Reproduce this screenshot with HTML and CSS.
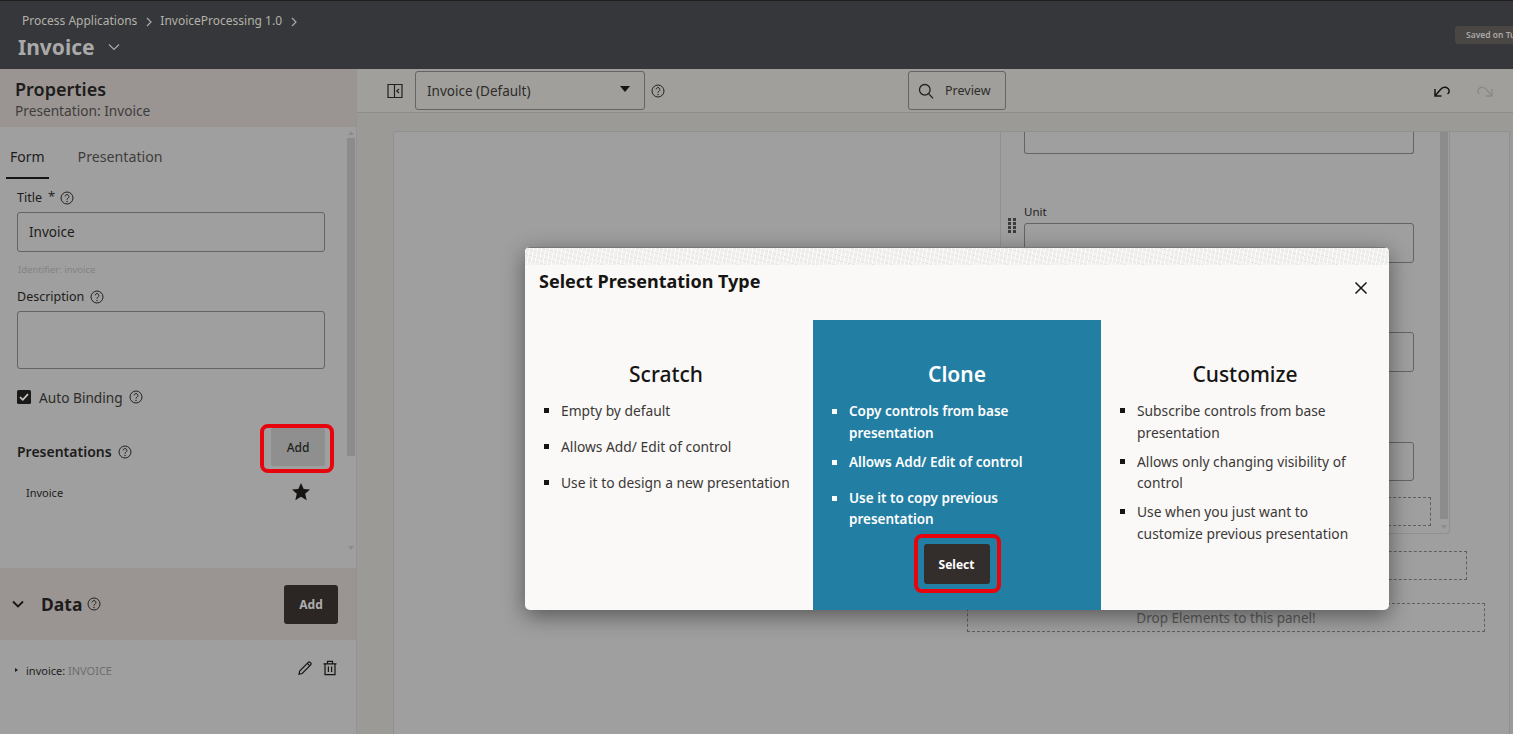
FILE: index.html
```html
<html lang="en">
  <head>
    <title>Invoice</title>
    <meta charset="utf-8">
    <link rel="stylesheet" href="styles.css">
  </head>
  <body>
    <header class="topbar">
      <div class="topbar-left">
        <div class="crumbs">
          <span>Process Applications</span>
          <svg class="crumb-sep" viewBox="0 0 8 10"><path d="M2 1l4 4-4 4"/></svg>
          <span>InvoiceProcessing 1.0</span>
          <svg class="crumb-sep" viewBox="0 0 8 10"><path d="M2 1l4 4-4 4"/></svg>
        </div>
        <div class="page-title">
          <span>Invoice</span>
          <svg class="title-chev" viewBox="0 0 12 8"><path d="M1 1.5l5 5 5-5"/></svg>
        </div>
      </div>
      <div class="saved">Saved on Tue</div>
    </header>

    <div class="main">
      <aside class="side">
        <div class="side-head">
          <h1>Properties</h1>
          <p>Presentation: Invoice</p>
        </div>
        <div class="side-scroll">
          <div class="side-form">
            <div class="tabs">
              <span class="tab tab-on">Form</span>
              <span class="tab">Presentation</span>
            </div>
            <div class="label l-title">Title <sup>*</sup> <svg class="help" viewBox="0 0 14 14"><use href="#q"/></svg></div>
            <div class="input">Invoice</div>
            <div class="ident">Identifier: invoice</div>
            <div class="label l-desc">Description <svg class="help" viewBox="0 0 14 14"><use href="#q"/></svg></div>
            <div class="input area"></div>
            <div class="check-row">
              <svg class="check" viewBox="0 0 14 14"><rect width="14" height="14" rx="1.5"/><path d="M3 7.2l2.8 2.6L11 4.2"/></svg>
              <span>Auto Binding</span>
              <svg class="help" viewBox="0 0 14 14"><use href="#q"/></svg>
            </div>
            <div class="pres-row">
              <span class="pres-title">Presentations</span>
              <svg class="help" viewBox="0 0 14 14"><use href="#q"/></svg>
              <span class="marked marked-add"><button class="btn-grey">Add</button></span>
            </div>
            <div class="pres-item">
              <span>Invoice</span>
              <svg class="star" viewBox="0 0 20 20"><path d="M10 1l2.7 6 6.3.6-4.8 4.2 1.5 6.4L10 14.8l-5.7 3.4 1.5-6.4L1 7.6 7.3 7z"/></svg>
            </div>
          </div>
          <div class="scrollbar">
            <i class="arrow-up"></i>
            <b class="thumb"></b>
            <i class="arrow-down"></i>
          </div>
        </div>
        <div class="data-head">
          <svg class="data-chev" viewBox="0 0 12 8"><path d="M1 1.5l5 5 5-5"/></svg>
          <span class="data-title">Data</span>
          <svg class="help" viewBox="0 0 14 14"><use href="#q"/></svg>
          <button class="btn-dark">Add</button>
        </div>
        <div class="data-row">
          <i class="tree-arrow"></i>
          <span>invoice: <em>INVOICE</em></span>
          <svg class="row-icon pencil" viewBox="0 0 16 16"><path d="M2 14.3l.7-3.3L11.5 2.2a1 1 0 0 1 1.4 0l1 1a1 1 0 0 1 0 1.4L5.2 13.5zM10.4 3.4l2.4 2.4"/></svg>
          <svg class="row-icon" viewBox="0 0 16 16"><path d="M1.5 3.8h13M5.5 3.8V1.3h5v2.5M3 3.8v10.9h10V3.8M6.4 6.5v5.5M9.6 6.5v5.5"/></svg>
        </div>
      </aside>

      <section class="work">
        <div class="toolbar">
          <svg class="collapse" viewBox="0 0 16 16"><path d="M1 1.5h14v13H1zM7.5 1.5v13M12 6L9.8 8l2.2 2"/></svg>
          <div class="select">
            <span>Invoice (Default)</span>
            <i class="caret"></i>
          </div>
          <svg class="help help-bar" viewBox="0 0 14 14"><use href="#q"/></svg>
          <button class="btn-preview">
            <svg viewBox="0 0 16 16"><circle cx="6.8" cy="6.8" r="5.3"/><path d="M10.6 10.6l4.4 4.8"/></svg>
            <span>Preview</span>
          </button>
          <svg class="undo" viewBox="0 0 18 14"><path d="M2 5v7h6.500M2 12l5.500-6.500c2.500-2.800 5.500-2.800 7.500-1 1.700 1.700 1.500 4-.5 5.500"/></svg>
          <svg class="redo" viewBox="0 0 18 14"><path d="M16 5v7H9.500M16 12l-5.500-6.500C8 2.700 5 2.700 3 4.500c-1.700 1.700-1.500 4 .5 5.500"/></svg>
        </div>
        <div class="canvas">
          <div class="card">
            <div class="form-area">
              <div class="form-col">
                <div class="form-inner">
                  <div class="fake-input first"></div>
                  <div class="unit-label">Unit</div>
                  <div class="unit-wrap">
                    <div class="grip"><i></i><i></i><i></i><i></i><i></i><i></i><i></i><i></i></div>
                    <div class="fake-input"></div>
                  </div>
                  <div class="fake-input gap-a"></div>
                  <div class="fake-input gap-b"></div>
                  <div class="dash dash-a"></div>
                </div>
                <div class="scrollbar canvas-bar"><b class="thumb"></b><i class="arrow-down"></i></div>
              </div>
              <div class="dash dash-b"></div>
              <div class="dash dash-c">Drop Elements to this panel!</div>
            </div>
          </div>
        </div>
      </section>
    </div>

    <div class="dialog">
      <div class="dialog-tex"></div>
      <div class="dialog-head">
        <h2>Select Presentation Type</h2>
        <svg class="close" viewBox="0 0 14 14"><path d="M1.500 1.500l11 11M12.500 1.500l-11 11"/></svg>
      </div>
      <div class="cols">
        <div class="col col-wide">
          <h3>Scratch</h3>
          <ul>
            <li>Empty by default</li>
            <li>Allows Add/ Edit of control</li>
            <li>Use it to design a new presentation</li>
          </ul>
        </div>
        <div class="col col-blue">
          <h3>Clone</h3>
          <ul>
            <li class="tight">Copy controls from base presentation</li>
            <li>Allows Add/ Edit of control</li>
            <li class="tight">Use it to copy previous presentation</li>
          </ul>
          <div class="select-wrap">
            <span class="marked marked-select"><button class="btn-select">Select</button></span>
          </div>
        </div>
        <div class="col col-tight">
          <h3>Customize</h3>
          <ul>
            <li>Subscribe controls from base presentation</li>
            <li>Allows only changing visibility of control</li>
            <li>Use when you just want to customize previous presentation</li>
          </ul>
        </div>
      </div>
    </div>

    <svg class="defs" width="0" height="0">
      <symbol id="q" viewBox="0 0 14 14">
        <circle cx="7" cy="7" r="6" fill="none" stroke="currentColor"/>
        <path d="M5.100 5.400a1.900 1.900 0 1 1 2.900 1.700c-.7.400-1 .8-1 1.600" fill="none" stroke="currentColor"/>
        <circle cx="7" cy="10.500" r=".7" fill="currentColor"/>
      </symbol>
    </svg>
  </body>
</html>
```

FILE: styles.css
```css
* { box-sizing: border-box; }
html, body { margin: 0; height: 100%; overflow: hidden; }
body {
	font-family: "Noto Sans", "Open Sans", sans-serif;
	color: #1d1c1b;
	background: #9f9f9f;
	font-size: 13px;
}
svg { display: block; flex: none; }
button { font-family: inherit; border: none; padding: 0; }
.defs { position: absolute; }

/* top bar */
.topbar {
	height: 69px;
	background: #36373b;
	border-top: 1px solid #211f1e;
	display: flex;
	justify-content: space-between;
	align-items: flex-start;
}
.topbar-left { padding: 12px 0 0 18px; }
.crumbs {
	display: flex;
	align-items: center;
	padding-left: 4px;
	font-size: 12px;
	line-height: 16px;
	color: #b3b2a8;
}
.crumb-sep { width: 8px; height: 10px; margin: 1px 7px 0 8px; }
.crumb-sep path, .title-chev path {
	fill: none;
	stroke: #a9a9a5;
	stroke-width: 1.200;
}
.page-title {
	display: flex;
	align-items: center;
	margin-top: 3px;
	font-size: 21px;
	line-height: 30px;
	font-weight: 700;
	color: #a9a9a9;
}
.title-chev { width: 12px; height: 8px; margin: 0 0 0 13px; }
.saved {
	width: 58px;
	height: 18px;
	margin-top: 25px;
	padding-left: 11px;
	background: #4a4644;
	border-radius: 3px 0 0 3px;
	color: #a9a9a9;
	font-size: 8.500px;
	font-weight: 600;
	line-height: 18px;
	white-space: nowrap;
	overflow: hidden;
}

.main { display: flex; height: 665px; }

/* left panel */
.side {
	width: 357px;
	flex: none;
	border-right: 1px solid #939393;
	background: #9f9f9f;
}
.side-head {
	height: 58px;
	background: #9a9593;
	padding: 9px 0 0 15px;
}
.side-head h1 {
	margin: 0;
	font-size: 18px;
	line-height: 22px;
	font-weight: 600;
}
.side-head p {
	margin: 2px 0 0;
	font-size: 13.700px;
	line-height: 18px;
	color: #3f3d3b;
}
.side-scroll { height: 441px; display: flex; }
.side-form { width: 346px; flex: none; }
.tabs { display: flex; padding: 14px 0 0 6px; height: 52px; }
.tab {
	font-size: 14.200px;
	line-height: 32px;
	padding: 0 4px;
	height: 38px;
	margin-right: 25px;
	color: #3f3d3b;
}
.tab-on { color: #1d1c1b; border-bottom: 2px solid #161513; margin-right: 25px; font-size: 14px; }
.label {
	display: flex;
	align-items: center;
	gap: 6px;
	margin-left: 17px;
	font-size: 12.500px;
	line-height: 18px;
}
.label sup { font-size: 13px; line-height: 10px; margin: -5px -1px 0 0; color: #24221f; }
.l-title { margin-top: 10px; margin-bottom: 5px; }
.l-desc { margin-top: 11px; margin-bottom: 5px; }
.help { width: 14px; height: 14px; color: #24221f; }
.input {
	width: 308px;
	height: 40px;
	margin-left: 17px;
	padding-left: 11px;
	border: 1px solid #646464;
	border-radius: 3px;
	font-size: 13.500px;
	line-height: 38px;
}
.area { height: 58px; }
.ident {
	margin: 11px 0 0 18px;
	font-size: 9.500px;
	line-height: 14px;
	color: #838383;
}
.check-row {
	display: flex;
	align-items: center;
	height: 18px;
	margin: 19px 0 0 17px;
	font-size: 13.700px;
	color: #2d2c2a;
}
.check { width: 14px; height: 14px; margin-right: 8px; }
.check rect { fill: #1b1918; }
.check path { fill: none; stroke: #c5c5c5; stroke-width: 1.800; }
.check-row .help { margin-left: 6px; }
.pres-row {
	display: flex;
	align-items: center;
	height: 49px;
	margin: 18px 0 0 17px;
}
.pres-title { font-size: 14px; font-weight: 600; margin-right: 6px; position: relative; top: 3px; }
.pres-row .help { position: relative; top: 3px; }
.marked {
	display: inline-flex;
	border: 4px solid #e8040c;
	border-radius: 8px;
}
.marked-add {
	margin-left: auto;
	margin-right: 12px;
	padding: 0 5px 3px 7px;
}
.btn-grey {
	width: 54px;
	height: 38px;
	background: #8f8f8f;
	color: #211f1e;
	font-size: 12px;
	font-weight: 500;
	border-radius: 2px;
}
.pres-item {
	display: flex;
	align-items: center;
	justify-content: space-between;
	height: 24px;
	padding: 0 35px 0 26px;
	margin-top: 7px;
	font-size: 11px;
}
.star { width: 20px; height: 20px; fill: #161513; }

.scrollbar {
	position: relative;
	width: 9px;
	flex: none;
	margin-left: 1px;
}
.thumb {
	position: absolute;
	left: 0;
	top: 11px;
	width: 8px;
	height: 318px;
	background: #8c8c8c;
}
.arrow-up, .arrow-down {
	position: absolute;
	left: 1px;
	width: 0;
	height: 0;
	border-left: 3px solid transparent;
	border-right: 3px solid transparent;
}
.arrow-up { top: 4px; border-bottom: 4px solid #8c8c8c; }
.arrow-down { bottom: 18px; border-top: 4px solid #8c8c8c; }

.data-head {
	display: flex;
	align-items: center;
	height: 72px;
	background: #9a9593;
	padding-left: 12px;
}
.data-chev { width: 12px; height: 8px; margin-right: 17px; }
.data-chev path { fill: none; stroke: #161513; stroke-width: 1.800; }
.data-title { font-size: 17.500px; font-weight: 700; margin-right: 5px; }
.btn-dark {
	width: 54px;
	height: 39px;
	margin-left: auto;
	margin-right: 18px;
	background: #2b2624;
	color: #aeaeae;
	border-radius: 3px;
	font-size: 12px;
	font-weight: 700;
}
.data-row {
	display: flex;
	align-items: center;
	height: 60px;
	padding: 0 18px 0 15px;
	font-size: 11px;
}
.data-row em { font-style: normal; color: #6e6e6e; }
.tree-arrow {
	width: 0;
	height: 0;
	margin-right: 8px;
	border-top: 2.500px solid transparent;
	border-bottom: 2.500px solid transparent;
	border-left: 3px solid #1d1c1b;
}
.row-icon { width: 16px; height: 16px; margin-left: 9px; position: relative; top: -2px; }
.row-icon path { fill: none; stroke: #161513; stroke-width: 1.200; }
.pencil { margin-left: auto; }

/* right side */
.work { flex: 1; min-width: 0; display: flex; flex-direction: column; }
.toolbar {
	height: 44px;
	flex: none;
	display: flex;
	align-items: center;
	background: #a09f9b;
	border-bottom: 1px solid #8e8d89;
	padding: 0 0 0 30px;
}
.collapse { width: 16px; height: 16px; margin-right: 12px; }
.collapse path { fill: none; stroke: #24221f; stroke-width: 1.200; }
.select {
	width: 230px;
	height: 39px;
	display: flex;
	align-items: center;
	justify-content: space-between;
	padding: 0 14px 0 11px;
	border: 1px solid #646464;
	border-radius: 3px;
	font-size: 13.500px;
	color: #2d2c2a;
}
.caret {
	width: 0;
	height: 0;
	margin-top: -3px;
	border-left: 5.500px solid transparent;
	border-right: 5.500px solid transparent;
	border-top: 6px solid #161513;
}
.help-bar { margin-left: 6px; }
.btn-preview {
	width: 98px;
	height: 39px;
	display: flex;
	align-items: center;
	margin-left: 243px;
	padding-left: 9px;
	background: none;
	border: 1px solid #646464;
	border-radius: 3px;
	font-size: 12.500px;
	color: #2d2c2a;
}
.btn-preview svg { width: 16px; height: 16px; margin-right: 11px; }
.btn-preview path, .btn-preview circle { fill: none; stroke: #24221f; stroke-width: 1.300; }
.undo, .redo { width: 18px; height: 14px; }
.undo { margin-left: 427px; }
.redo { margin-left: 25px; }
.undo path { fill: none; stroke: #161513; stroke-width: 1.500; }
.redo path { fill: none; stroke: #8a8a87; stroke-width: 1.300; }

.canvas {
	flex: 1;
	min-height: 0;
	background: #9b9a96;
	padding: 18px 3px 0 36px;
}
.card {
	height: 100%;
	background: #9f9f9f;
	border: 1px solid #8f9094;
	border-bottom: none;
	border-radius: 4px 0 0 0;
	padding-left: 573px;
	overflow: hidden;
}
.form-col {
	width: 450px;
	height: 402px;
	margin-left: 33px;
	display: flex;
	border-left: 1px solid #909090;
	border-right: 1px solid #909090;
	border-bottom: 1px solid #909090;
	border-radius: 0 0 4px 0;
}
.form-inner { width: 439px; flex: none; padding-left: 23px; }
.fake-input {
	width: 390px;
	height: 40px;
	border: 1px solid #646464;
	border-radius: 3px;
}
.first { height: 22px; border-top: none; border-radius: 0 0 3px 3px; }
.unit-label { margin-top: 50px; font-size: 11.500px; line-height: 16px; }
.unit-wrap { position: relative; margin-top: 3px; }
.grip {
	position: absolute;
	left: -16px;
	top: -5px;
	width: 8px;
	display: grid;
	grid-template-columns: 3px 3px;
	gap: 1px 2px;
}
.grip i { height: 3px; background: #3b3b3b; }
.gap-a { margin-top: 69px; }
.gap-b { margin-top: 70px; height: 39px; }
.dash { border: 1px dashed #5f5f5f; }
.dash-a { width: 407px; height: 29px; margin-top: 16px; }
.canvas-bar { width: 8px; margin: 0; }
.canvas-bar .thumb { top: 0; height: 387px; }
.canvas-bar .arrow-down { bottom: 4px; }
.dash-b { width: 500px; height: 29px; margin-top: 17px; }
.dash-c {
	width: 518px;
	height: 29px;
	margin-top: 23px;
	text-align: center;
	font-size: 13.500px;
	line-height: 29px;
	color: #5a5a5a;
}

/* dialog over everything */
.dialog {
	position: absolute;
	left: 525px;
	top: 247px;
	width: 864px;
	height: 363px;
	background: #faf9f7;
	border-radius: 5px;
	box-shadow: 0 6px 22px rgba(0,0,0,0.45);
	overflow: hidden;
}
.dialog-tex {
	height: 18px;
	background-color: #f1f0ee;
	background-image:
		repeating-linear-gradient(100deg, rgba(255,255,255,0.7) 0 1px, transparent 1px 4px),
		repeating-linear-gradient(15deg, rgba(225,224,222,0.6) 0 1px, transparent 1px 5px);
	border-top: 1px solid #777;
}
.dialog-head {
	height: 55px;
	display: flex;
	justify-content: space-between;
	padding: 4px 21px 0 14px;
}
.dialog-head h2 { margin: 0; font-size: 18px; line-height: 24px; font-weight: 700; color: #161513; }
.close { width: 14px; height: 14px; margin-top: 12px; }
.close path { fill: none; stroke: #161513; stroke-width: 1.500; }
.cols { display: flex; height: 290px; }
.col { width: 288px; padding-top: 39px; color: #3a3836; }
.col h3 {
	margin: 0 0 11px;
	text-align: center;
	font-size: 21px;
	line-height: 30px;
	font-weight: 500;
	color: #161513;
}
.col-wide h3 { padding-right: 6px; }
.col ul {
	list-style: none;
	margin: 0;
	padding: 0 26px 0 36px;
	font-size: 13.800px;
	line-height: 21.600px;
}
.col-wide ul { padding-right: 0; }
.col li { position: relative; margin-bottom: 14.400px; }
.col li::before {
	content: "";
	position: absolute;
	left: -17px;
	top: 8px;
	width: 5px;
	height: 5px;
	background: #161513;
}
.col-tight li { margin-bottom: 7.400px; }
.col-blue { background: #227ea2; color: #fff; font-weight: 600; }
.col-blue ul { font-size: 13.500px; margin-top: 12px; }
.col-blue h3 { color: #fff; font-weight: 600; }
.col-blue li::before { background: #fff; }
.col-blue li.tight { margin-bottom: 7.400px; }
.select-wrap { display: flex; justify-content: center; margin-top: -4px; }
.marked-select { padding: 6px 7px 5px 6px; }
.btn-select {
	width: 66px;
	height: 40px;
	background: #332e2b;
	color: #fff;
	border-radius: 3px;
	font-size: 12px;
	font-weight: 700;
}
```
